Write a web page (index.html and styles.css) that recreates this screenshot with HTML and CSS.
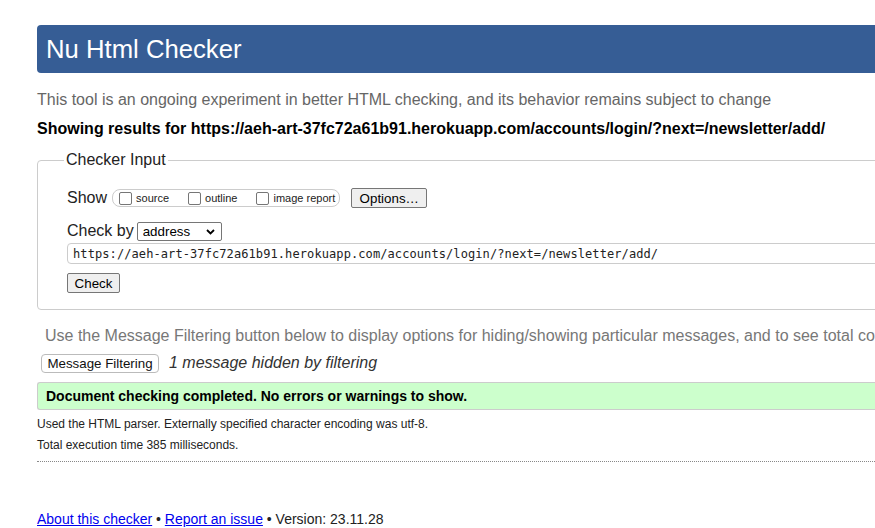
FILE: index.html
```html
<!DOCTYPE html>
<html lang="en">
<head>
<meta charset="utf-8">
<title>Nu Html Checker</title>
<link rel="stylesheet" href="styles.css">
</head>
<body>
<div class="page">
  <h1 class="title">Nu Html Checker</h1>
  <p class="intro">This tool is an ongoing experiment in better HTML checking, and its behavior remains subject to change</p>
  <p class="showing">Showing results for https://aeh-art-37fc72a61b91.herokuapp.com/accounts/login/?next=/newsletter/add/</p>
  <form class="form">
    <fieldset class="input-box">
      <legend class="legend">Checker Input</legend>
      <div class="row show-row">
        <span class="label">Show</span>
        <span class="opts">
          <label class="opt"><input type="checkbox" class="cb">source</label>
          <label class="opt"><input type="checkbox" class="cb">outline</label>
          <label class="opt"><input type="checkbox" class="cb">image report</label>
        </span>
        <button type="button" class="btn btn-options">Options…</button>
      </div>
      <div class="row by-row">
        <span class="label label-by">Check by</span>
        <span class="select-wrap">
          <select class="select"><option>address</option></select>
          <svg class="chev" width="9" height="6" viewBox="0 0 9 6"><path d="M1 1 L4.5 4.5 L8 1" fill="none" stroke="#000" stroke-width="1.8"/></svg>
        </span>
      </div>
      <input class="url" type="text" value="https://aeh-art-37fc72a61b91.herokuapp.com/accounts/login/?next=/newsletter/add/">
      <div class="row check-row"><button type="button" class="btn">Check</button></div>
    </fieldset>
  </form>
  <p class="filter-note">Use the Message Filtering button below to display options for hiding/showing particular messages, and to see total counts of errors and warnings.</p>
  <div class="row filter-row">
    <button type="button" class="btn-filter">Message Filtering</button>
    <span class="hidden-note">1 message hidden by filtering</span>
  </div>
  <div class="success">Document checking completed. No errors or warnings to show.</div>
  <p class="details">Used the HTML parser. Externally specified character encoding was utf-8.</p>
  <p class="details details-time">Total execution time 385 milliseconds.</p>
  <hr class="sep">
  <p class="footer"><a href="#" class="link">About this checker</a> • <a href="#" class="link">Report an issue</a> • Version: 23.11.28</p>
</div>
</body>
</html>
```
FILE: styles.css
```css
html { overflow: hidden; }
body {
  margin: 0;
  font-family: "Liberation Sans", Arial, sans-serif;
  color: #111;
  background: #fff;
}
.page {
  width: 1300px;
  padding: 25px 0 0 37px;
}
.title {
  margin: 0;
  height: 48px;
  line-height: 48px;
  padding-left: 9px;
  background: #365d95;
  color: #fff;
  font-size: 25.7px;
  font-weight: normal;
  border-radius: 4px;
}
.intro {
  margin: 17px 0 0;
  font-size: 16px;
  line-height: 20px;
  color: #666;
}
.showing {
  margin: 9px 0 0;
  font-size: 16px;
  line-height: 20px;
  font-weight: bold;
  color: #000;
}
.form { margin: 11px 0 0; }
.input-box {
  margin: 0;
  padding: 17px 0 16px 29px;
  border: 1px solid #ccc;
  border-radius: 4px;
  min-width: 0;
}
.legend {
  padding: 0 2px;
  margin-left: -3px;
  font-size: 16px;
  line-height: 20px;
  color: #222;
}
.row {
  display: flex;
  align-items: center;
}
.show-row { height: 22px; }
.label {
  font-size: 16px;
  color: #222;
}
.opts {
  display: inline-flex;
  align-items: center;
  height: 16px;
  margin-left: 5px;
  padding: 0 4px 0 6px;
  border: 1px solid #ccc;
  border-radius: 8px;
}
.opt {
  display: inline-flex;
  align-items: center;
  font-size: 11px;
  color: #222;
  margin-right: 19px;
}
.opt:last-child { margin-right: 0; }
.cb {
  appearance: none;
  -webkit-appearance: none;
  width: 13px;
  height: 13px;
  margin: 0 4px 0 0;
  border: 1px solid #767676;
  border-radius: 2px;
  background: #fff;
}
.btn {
  font-family: "Liberation Sans", Arial, sans-serif;
  font-size: 13.33px;
  height: 20px;
  padding: 0 6px;
  background: #efefef;
  border: 1px solid #767676;
  border-radius: 2px;
  color: #000;
}
.btn-options {
  margin-left: 11px;
  width: 76px;
}
.by-row {
  height: 22px;
  margin-top: 11px;
}
.label-by { margin-right: 3px; }
.select-wrap {
  position: relative;
  display: inline-block;
  height: 19px;
}
.select {
  appearance: none;
  -webkit-appearance: none;
  width: 85px;
  height: 19px;
  padding: 0 0 0 5px;
  font-family: "Liberation Sans", Arial, sans-serif;
  font-size: 13.33px;
  color: #000;
  background: #fff;
  border: 1px solid #767676;
  border-radius: 2px;
}
.chev {
  position: absolute;
  right: 7px;
  top: 7px;
}
.url {
  display: block;
  box-sizing: border-box;
  width: 1240px;
  height: 21px;
  margin-top: 1px;
  padding: 0 5px;
  font-family: "DejaVu Sans Mono", "Liberation Mono", monospace;
  font-size: 12px;
  letter-spacing: 0.09px;
  color: #222;
  border: 1px solid #ccc;
  border-radius: 4px;
  background: #fff;
}
.check-row { margin-top: 9px; }
.check-row .btn { width: 53px; padding: 0; }
.filter-note {
  margin: 16px 0 0 8px;
  font-size: 16px;
  line-height: 20px;
  color: #777;
  white-space: nowrap;
}
.filter-row {
  margin-top: 7px;
  height: 20px;
}
.btn-filter {
  margin-left: 4px;
  height: 19px;
  width: 118px;
  padding: 0;
  font-family: "Liberation Sans", Arial, sans-serif;
  font-size: 13.33px;
  color: #111;
  background: #fff;
  border: 1px solid #bbb;
  border-radius: 4px;
}
.hidden-note {
  margin-left: 10px;
  font-size: 16px;
  font-style: italic;
  color: #333;
}
.success {
  margin-top: 9px;
  height: 26px;
  line-height: 26px;
  padding-left: 8px;
  font-size: 14px;
  font-weight: bold;
  color: #000;
  background: #ccffcc;
  border: 1px solid #ccc;
  border-right: none;
  border-radius: 3px 0 0 3px;
}
.details {
  margin: 7px 0 0;
  font-size: 12px;
  line-height: 14px;
  color: #222;
}
.details-time { margin-top: 7px; }
.sep {
  margin: 9px 0 0;
  border: none;
  border-top: 1px dotted #888;
  height: 0;
}
.footer {
  margin: 49px 0 0;
  font-size: 14px;
  line-height: 16px;
  color: #222;
}
.link { color: #0000ee; }
```
